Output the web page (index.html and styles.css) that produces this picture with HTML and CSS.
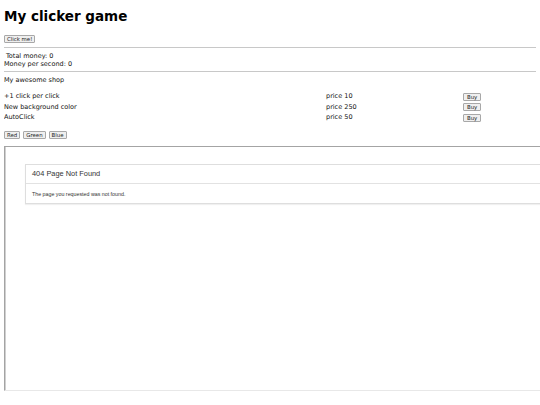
FILE: index.html
```html
<!DOCTYPE html>
<html lang="en">
<head>
  <meta charset="UTF-8">
  <title>My clicker game</title>
  <link rel="stylesheet" href="styles.css">
</head>
<body>

  <h1>My clicker game</h1>

  <div class="line">
    <button class="btn" id="clickBtn">Click me!</button>
  </div>

  <hr class="top-rule">

  <div class="stats">
    <div class="total">Total money: <span id="money">0</span></div>
    <div>Money per second: <span id="perSecond">0</span></div>
  </div>

  <hr class="shop-rule">

  <div class="shop-title">My awesome shop</div>

  <div class="shop">
    <div class="shop-row">
      <span>+1 click per click</span>
      <span>price 10</span>
      <span><button class="btn">Buy</button></span>
    </div>
    <div class="shop-row">
      <span>New background color</span>
      <span>price 250</span>
      <span><button class="btn">Buy</button></span>
    </div>
    <div class="shop-row">
      <span>AutoClick</span>
      <span>price 50</span>
      <span><button class="btn">Buy</button></span>
    </div>
  </div>

  <div class="colors">
    <button class="btn">Red</button>
    <button class="btn">Green</button>
    <button class="btn">Blue</button>
  </div>

  <!-- embedded page, drawn as a frame cut off by the window edge -->
  <div class="frame">
    <div class="panel">
      <div class="panel-heading">404 Page Not Found</div>
      <div class="panel-body">The page you requested was not found.</div>
    </div>
  </div>

</body>
</html>
```

FILE: styles.css
```css
:root {
  --text-size: 6.5px;
  --button-size: 5.4px;
  --rule-color: #c8c8c8;
}

/* no right margin: the frame runs on to the window edge */
body {
  margin: 0 0 0 4px;
  font-family: "DejaVu Sans", sans-serif;
  font-size: var(--text-size);
  line-height: 7.5px;
  color: #111;
  background: #fff;
}

h1 {
  font-size: 13.5px;
  line-height: 15px;
  font-weight: bold;
  margin: 9px 0 11px;
  color: #000;
}

.line {
  height: 8.5px;
  line-height: 8px;
}

.btn {
  font-family: "DejaVu Sans", sans-serif;
  font-size: var(--button-size);
  line-height: 6px;
  height: 8px;
  padding: 0 2px;
  margin: 0;
  color: #222;
  background: #efefef;
  border: 1px solid #a8a8a8;
  border-radius: 1px;
  vertical-align: top;
}

hr {
  border: none;
  border-top: 1px solid var(--rule-color);
  margin: 3.5px 4px 5px 0;
}

.shop-rule {
  margin-top: 3px;
}

.total {
  padding-left: 2px;
}

.shop {
  margin-top: 7px;
}

.shop-row {
  display: grid;
  grid-template-columns: 322px 137px auto;
  align-items: center;
  height: 10.5px;
}

.shop-row .btn {
  padding: 0 3px;
}

.colors {
  display: flex;
  gap: 3px;
  margin-top: 8px;
  height: 8.5px;
}

.frame {
  margin-top: 6.5px;
  height: 243px;
  border: 1px solid #e8e8e8;
  border-right: none;
  border-top-color: #a4a4a4;
  border-left-color: #a4a4a4;
  box-shadow: inset 1px 0 0 #d0d0d0;
}

.panel {
  margin: 17px 0 0 20px;
  border: 1px solid #dedede;
  border-right: none;
  box-shadow: 0 1px 1px rgba(0, 0, 0, 0.06);
  font-family: "Liberation Sans", Arial, sans-serif;
  color: #333;
}

.panel-heading {
  padding: 5px 6px;
  font-size: 7.4px;
  line-height: 8px;
  border-bottom: 1px solid #e2e2e2;
}

.panel-body {
  padding: 6.5px 6px;
  font-size: 5.3px;
  line-height: 6px;
}
```
